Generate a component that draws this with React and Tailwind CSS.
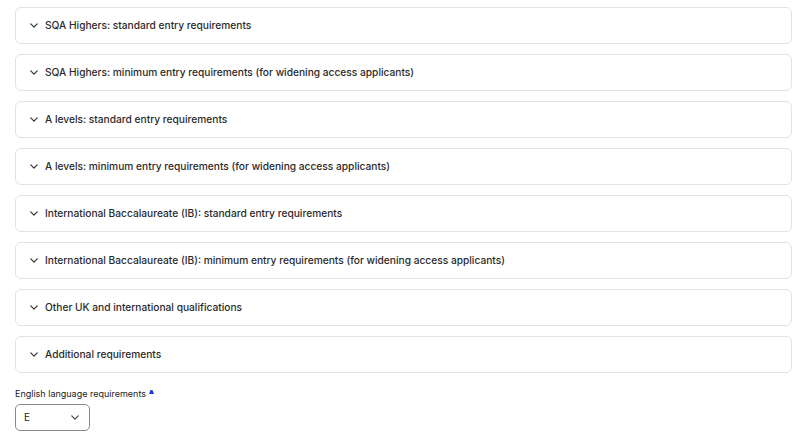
import React from "react";

const items = [
  "SQA Highers: standard entry requirements",
  "SQA Highers: minimum entry requirements (for widening access applicants)",
  "A levels: standard entry requirements",
  "A levels: minimum entry requirements (for widening access applicants)",
  "International Baccalaureate (IB): standard entry requirements",
  "International Baccalaureate (IB): minimum entry requirements (for widening access applicants)",
  "Other UK and international qualifications",
  "Additional requirements",
];

function Chevron({ className }) {
  return (
    <svg className={className} viewBox="0 0 10 6" fill="none" stroke="currentColor" strokeWidth="1.5" strokeLinecap="round" strokeLinejoin="round">
      <path d="M1 1l4 4 4-4" />
    </svg>
  );
}

export default function App() {
  return (
    <div className="w-[806px] h-[441px] bg-white px-[15px] pt-[7px] overflow-hidden" style={{ fontFamily: "Inter, 'Noto Sans', sans-serif" }}>
      <div className="flex flex-col gap-[10px] w-[777px]">
        {items.map((t) => (
          <div key={t} className="h-[37px] border border-[#e2e2e2] rounded-[6px] flex items-center pl-[14px] text-[#2a2a2a]">
            <Chevron className="w-[8px] h-[5px] text-[#333]" />
            <span className="ml-[7px] text-[10.2px] font-medium leading-none">{t}</span>
          </div>
        ))}
      </div>
      <div className="mt-[16px] text-[9px] text-[#222] leading-none flex items-start">
        <span>English language requirements</span>
        <svg className="ml-[3px] mt-[1px] w-[5px] h-[4px]" viewBox="0 0 10 8" fill="#1d3fd6">
          <path d="M3 0 L7 0 L10 8 L0 8 Z" />
        </svg>
      </div>
      <div className="mt-[6px] w-[75px] h-[27px] border border-[#8a8a8a] rounded-[5px] flex items-center justify-between pl-[8px] pr-[10px] text-[10px] text-[#222]">
        <span>E</span>
        <Chevron className="w-[8px] h-[5px] text-[#444]" />
      </div>
    </div>
  );
}
